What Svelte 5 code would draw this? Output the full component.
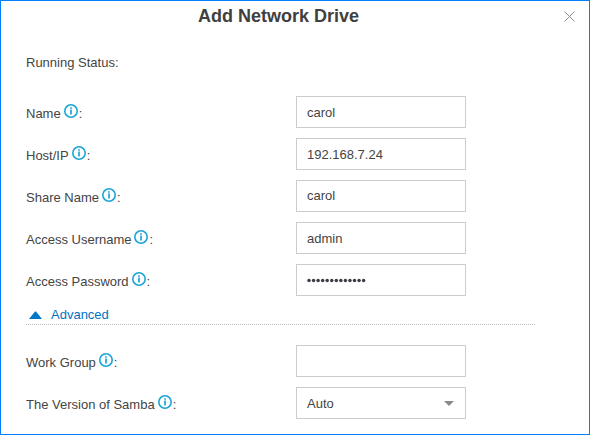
<script>
  const fields = [
    { label: 'Name', value: 'carol' },
    { label: 'Host/IP', value: '192.168.7.24' },
    { label: 'Share Name', value: 'carol', raised: true },
    { label: 'Access Username', value: 'admin' },
    { label: 'Access Password', value: '', dots: 13 }
  ];
  const advanced = [
    { label: 'Work Group', value: '' },
    { label: 'The Version of Samba', value: 'Auto', select: true }
  ];
</script>

{#snippet row(f)}
  <div class="row">
    <div class="label">
      <span>{f.label}</span>
      <svg class="info" width="14" height="14" viewBox="0 0 14 14">
        <circle cx="7" cy="7" r="6.2" fill="none" stroke="#1ba5d6" stroke-width="1.6" />
        <path d="M7 3.2v1.6M7 5.6v4.9" stroke="#1ba5d6" stroke-width="1.7" />
      </svg>
      <span>:</span>
    </div>
    <div class="box">
      {#if f.dots}
        <svg width="60" height="5" viewBox="0 0 60 5">
          {#each Array(f.dots) as _, i}
            <circle cx={2 + i * 4.55} cy="2.5" r="1.75" fill="#3c3c44" />
          {/each}
        </svg>
      {:else}
        <span class="value" class:raised={f.raised}>{f.value}</span>
      {/if}
      {#if f.select}
        <svg class="arrow" width="10" height="5" viewBox="0 0 10 5"><path d="M0 0h10L5 5z" fill="#8a8a8a" /></svg>
      {/if}
    </div>
  </div>
{/snippet}

<div class="dialog">
  <header>
    <h1>Add Network Drive</h1>
    <svg class="close" width="11" height="11" viewBox="0 0 11 11">
      <path d="M.5 .5l10 10M10.5 .5l-10 10" stroke="#8c8c8c" stroke-width="1" fill="none" />
    </svg>
  </header>
  <div class="status">Running Status:</div>
  <div class="group">
    {#each fields as f}{@render row(f)}{/each}
  </div>
  <div class="advanced">
    <svg width="13" height="8" viewBox="0 0 13 8"><path d="M0 8L6 .5h1L13 8z" fill="#0078c8" /></svg>
    <span>Advanced</span>
  </div>
  <div class="group">
    {#each advanced as f}{@render row(f)}{/each}
  </div>
</div>

<style>
  .dialog {
    box-sizing: border-box;
    width: 590px;
    height: 435px;
    border: 1px solid #0080ff;
    background: #fff;
    padding: 0 25px;
    font: 13px/16px "Liberation Sans", Arial, sans-serif;
    color: #444;
    overflow: hidden;
  }
  header {
    position: relative;
    height: 46px;
  }
  h1 {
    margin: 0;
    padding-top: 4px;
    width: 505px;
    text-align: center;
    font-size: 18px;
    line-height: 22px;
    color: #404040;
  }
  .close {
    position: absolute;
    right: -11px;
    top: 10px;
  }
  .status {
    height: 41px;
    padding-top: 8px;
    box-sizing: content-box;
  }
  .group {
    display: flex;
    flex-direction: column;
    gap: 10px;
  }
  .row {
    display: flex;
    height: 32px;
  }
  .label {
    display: flex;
    width: 270px;
    padding-top: 10px;
  }
  .info {
    margin: -2px 1px 0 3px;
  }
  .box {
    box-sizing: border-box;
    width: 170px;
    height: 32px;
    border: 1px solid #ccc;
    padding: 0 11px 0 10px;
    display: flex;
    align-items: center;
    justify-content: space-between;
  }
  .value {
    padding-top: 2px;
  }
  .value.raised {
    padding-top: 0;
  }
  .advanced {
    display: flex;
    align-items: center;
    box-sizing: border-box;
    width: 509px;
    height: 29px;
    margin-bottom: 20px;
    padding: 9px 0 0 3px;
    gap: 9px;
    color: #0072bc;
    border-bottom: 1px dotted #bbb;
  }
</style>
